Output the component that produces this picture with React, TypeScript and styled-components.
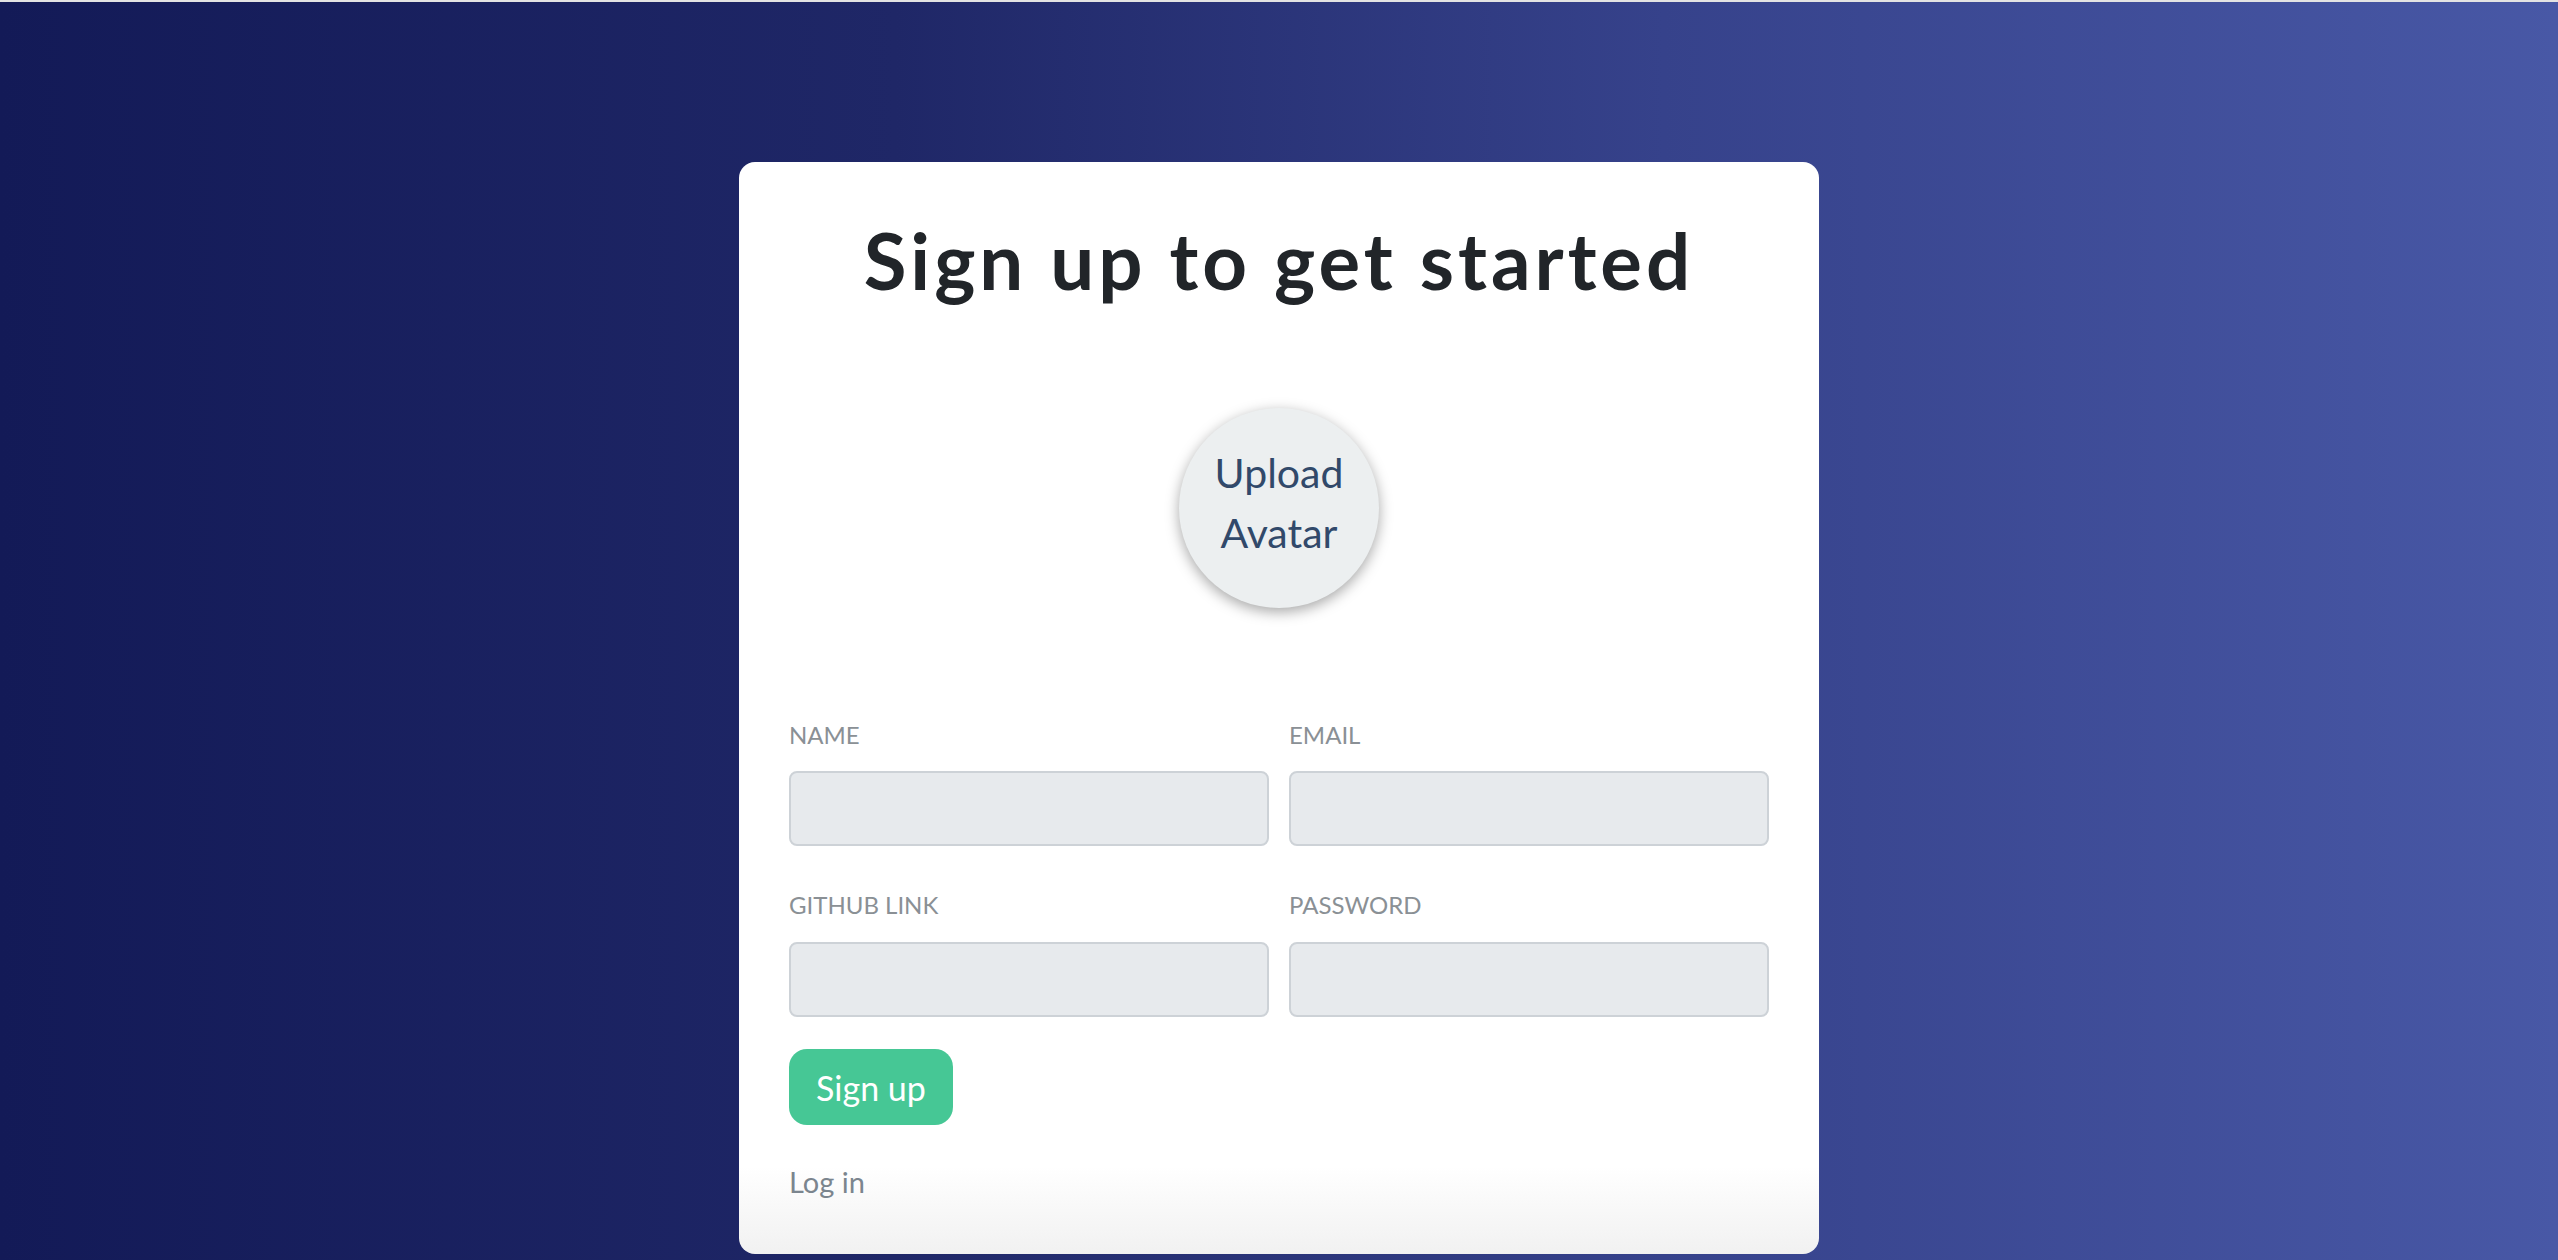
import styled, { createGlobalStyle } from 'styled-components';

const GlobalStyle = createGlobalStyle`
  html, body {
    margin: 0;
    padding: 0;
  }

  body {
    font-family: Lato, 'Open Sans', sans-serif;
    background: #141b59;
  }

  * {
    box-sizing: border-box;
  }
`;

const fields = [
  { id: 'name', label: 'NAME', type: 'text' },
  { id: 'email', label: 'EMAIL', type: 'email' },
  { id: 'github', label: 'GITHUB LINK', type: 'url' },
  { id: 'password', label: 'PASSWORD', type: 'password' },
];

export default function App() {
  return (
    <>
      <GlobalStyle />
      <TopStrip />
      <Page>
        <Card>
          <Title>Sign up to get started</Title>

          <AvatarWrap>
            <AvatarButton type="button">
              Upload
              <br />
              Avatar
            </AvatarButton>
          </AvatarWrap>

          <FieldGrid>
            {fields.map((field) => (
              <Field key={field.id}>
                <Label htmlFor={field.id}>{field.label}</Label>
                <Input id={field.id} type={field.type} />
              </Field>
            ))}
          </FieldGrid>

          <SubmitButton type="submit">Sign up</SubmitButton>

          <LoginLink href="#">Log in</LoginLink>
        </Card>
      </Page>
    </>
  );
}

const TopStrip = styled.div`
  height: 2px;
  background-color: #e3e3e3;
`;

const Page = styled.main`
  min-height: 1258px;
  display: flex;
  justify-content: center;
  align-items: flex-start;
  padding-top: 160px;
  background: linear-gradient(to right, #131a57 0%, #1f2767 35%, #36428b 65%, #4858a6 100%);
`;

const Card = styled.form`
  width: 1080px;
  display: flex;
  flex-direction: column;
  padding: 0 50px 54px;
  border-radius: 16px;
  background: linear-gradient(to bottom, #ffffff 0%, #ffffff 92%, #f1f1f1 100%);
`;

const Title = styled.h1`
  margin: 52px 0 0;
  text-align: center;
  font-size: 78px;
  line-height: 1.2;
  font-weight: 700;
  letter-spacing: 4px;
  color: #212529;
`;

const AvatarWrap = styled.div`
  display: flex;
  justify-content: center;
  margin-top: 100px;
`;

const AvatarButton = styled.button`
  width: 200px;
  height: 200px;
  border: none;
  border-radius: 50%;
  background-color: #eceff0;
  box-shadow: 0 4px 14px rgba(0, 0, 0, 0.35);
  color: #31496a;
  font-family: inherit;
  font-size: 41px;
  line-height: 60px;
  padding: 0 0 10px;
  cursor: pointer;
`;

const FieldGrid = styled.div`
  display: grid;
  grid-template-columns: 1fr 1fr;
  column-gap: 20px;
  row-gap: 45px;
  margin-top: 113px;
`;

const Field = styled.div`
  display: flex;
  flex-direction: column;
  gap: 22px;
`;

const Label = styled.label`
  font-size: 24px;
  line-height: 1.2;
  color: #8a9095;
`;

const Input = styled.input`
  height: 75px;
  width: 100%;
  border: 2px solid #cdd2d7;
  border-radius: 8px;
  background-color: #e7eaed;
  font-family: inherit;
  font-size: 24px;
  padding: 0 16px;
  outline: none;
`;

const SubmitButton = styled.button`
  align-self: flex-start;
  margin-top: 32px;
  height: 76px;
  padding: 0 27px;
  border: none;
  border-radius: 18px;
  background-color: #46c795;
  color: #ffffff;
  font-family: inherit;
  font-size: 34px;
  cursor: pointer;
`;

const LoginLink = styled.a`
  align-self: flex-start;
  margin-top: 40px;
  font-size: 29px;
  line-height: 1.2;
  color: #7b858e;
  text-decoration: none;
`;
